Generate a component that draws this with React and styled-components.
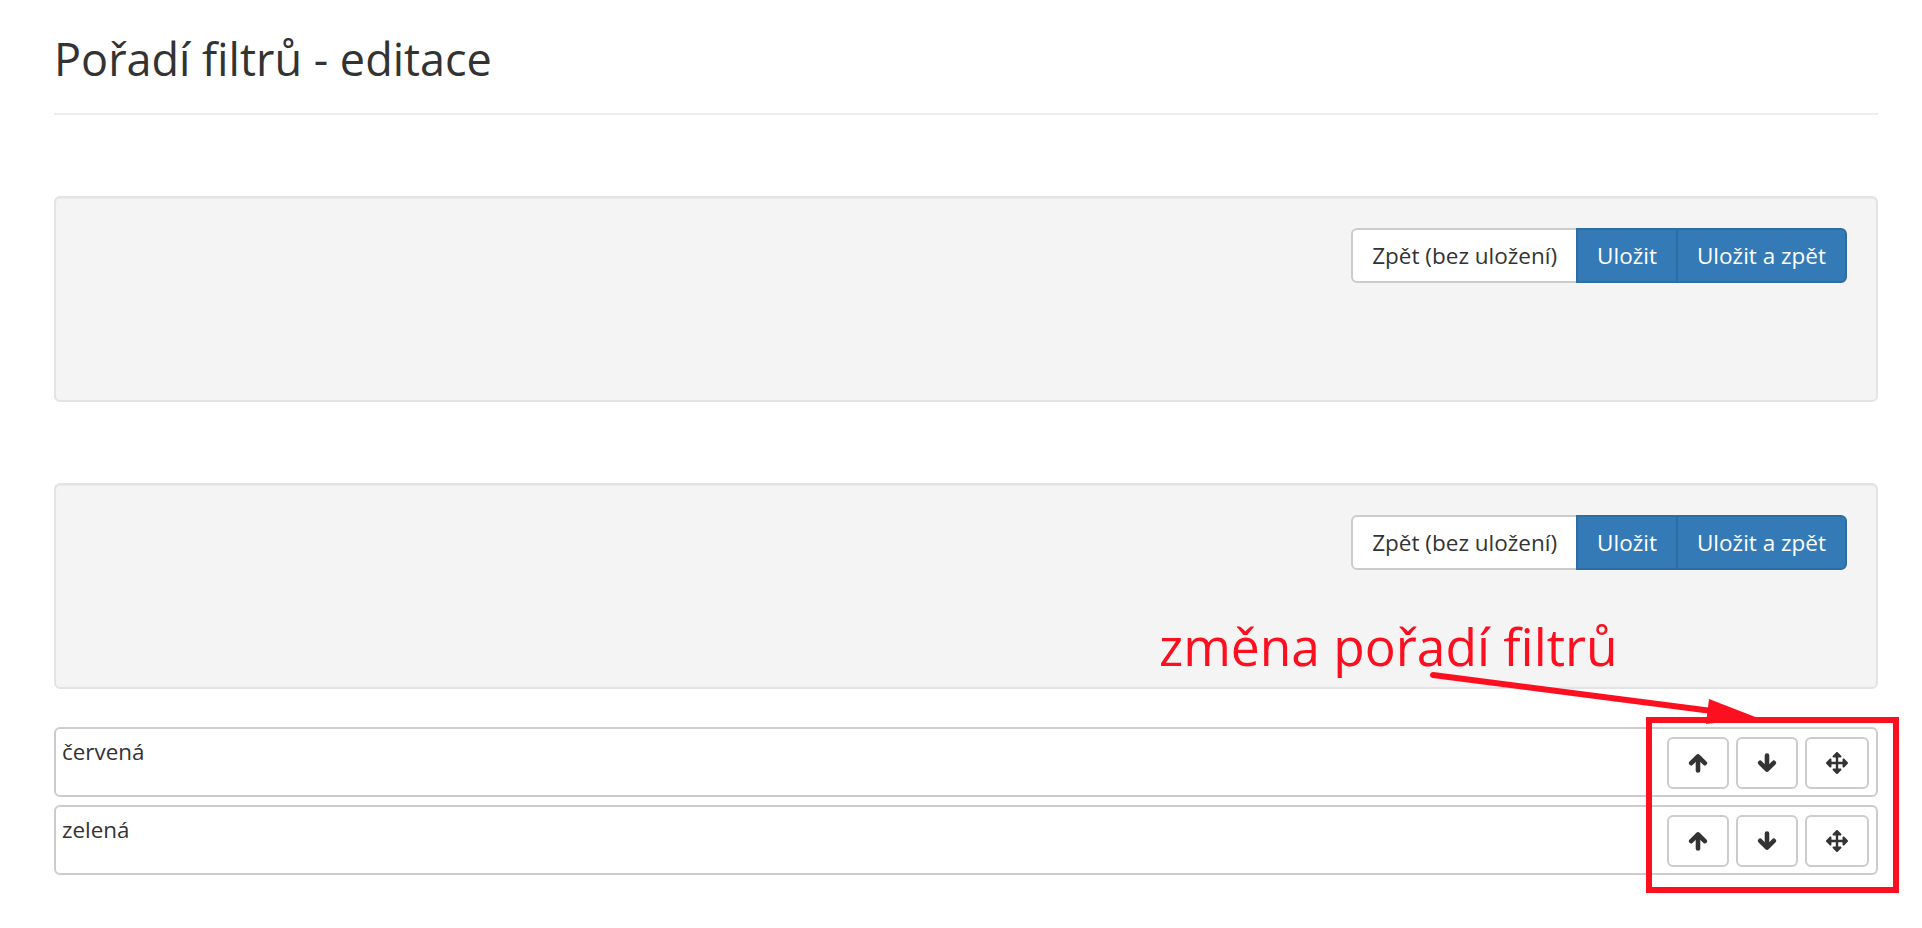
import React from "react";
import styled, { createGlobalStyle } from "styled-components";
import { FaArrowsAlt } from "react-icons/fa";

const GlobalStyle = createGlobalStyle`
  html, body {
    margin: 0;
    padding: 0;
    background: #fff;
  }
  body {
    font-family: "Open Sans", "Liberation Sans", sans-serif;
    color: #333;
  }
  * {
    box-sizing: border-box;
  }
`;

const Page = styled.div`
  position: relative;
  min-height: 928px;
  padding: 35px 44px 0 54px;
`;

const PageHeader = styled.h1`
  margin: 0 0 81px;
  padding-bottom: 30px;
  border-bottom: 2px solid #eee;
  font-size: 45px;
  font-weight: 400;
  line-height: 48px;
  color: #333;
`;

const Well = styled.div`
  display: flex;
  justify-content: flex-end;
  align-items: flex-start;
  height: 206px;
  padding: 30px 29px 29px;
  margin-bottom: ${(p) => p.$gap}px;
  background: #f4f4f4;
  border: 2px solid #e3e3e3;
  border-radius: 6px;
  box-shadow: inset 0 1px 1px rgba(0, 0, 0, 0.05);
`;

const ButtonGroup = styled.div`
  display: flex;
`;

const ActionButton = styled.button`
  font-family: "Open Sans", "Liberation Sans", sans-serif;
  font-size: 22.5px;
  line-height: 31px;
  padding: 10px 19px;
  border: 2px solid ${(p) => (p.$primary ? "#2e6da4" : "#ccc")};
  background: ${(p) => (p.$primary ? "#337ab7" : "#fff")};
  color: ${(p) => (p.$primary ? "#fff" : "#333")};
  border-radius: 0;
  cursor: pointer;

  & + & {
    margin-left: -2px;
  }
  &:first-child {
    border-radius: 6px 0 0 6px;
  }
  &:last-child {
    border-radius: 0 6px 6px 0;
  }
`;

const FilterList = styled.div`
  display: flex;
  flex-direction: column;
  gap: 8px;
`;

const FilterRow = styled.div`
  display: flex;
  justify-content: space-between;
  align-items: flex-start;
  height: 70px;
  padding: 8px 7px 0 6px;
  border: 2px solid #ccc;
  border-radius: 6px;
`;

const FilterName = styled.div`
  font-size: 22.4px;
  line-height: 29px;
  color: #333;
`;

const RowTools = styled.div`
  display: flex;
  gap: 7px;
`;

const IconButton = styled.button`
  display: flex;
  align-items: center;
  justify-content: center;
  width: ${(p) => p.$w}px;
  height: 52px;
  padding: 0;
  background: #fff;
  border: 2px solid #ccc;
  border-radius: 6px;
  color: #333;
  cursor: pointer;
`;

const NoteText = styled.div`
  position: absolute;
  left: 1159px;
  top: 621px;
  font-size: 51.5px;
  line-height: 50px;
  color: #fc0f1e;
  white-space: nowrap;
`;

const NoteLayer = styled.svg`
  position: absolute;
  left: 0;
  top: 0;
  width: 1922px;
  height: 928px;
  pointer-events: none;
`;

const Arrow = ({ down }) => (
  <svg
    width="20"
    height="20"
    viewBox="0 0 20 20"
    style={down ? { transform: "rotate(180deg)" } : undefined}
  >
    <g
      fill="none"
      stroke="currentColor"
      strokeWidth="4.6"
      strokeLinecap="round"
      strokeLinejoin="round"
    >
      <path d="M10 17.5V4" />
      <path d="M3.2 10.2L10 3.4l6.8 6.8" />
    </g>
  </svg>
);

const Toolbar = () => (
  <ButtonGroup>
    <ActionButton>Zpět (bez uložení)</ActionButton>
    <ActionButton $primary>Uložit</ActionButton>
    <ActionButton $primary>Uložit a zpět</ActionButton>
  </ButtonGroup>
);

const filters = ["červená", "zelená"];

export default function App() {
  return (
    <>
      <GlobalStyle />
      <Page>
        <PageHeader>Pořadí filtrů - editace</PageHeader>

        <Well $gap={81}>
          <Toolbar />
        </Well>
        <Well $gap={38}>
          <Toolbar />
        </Well>

        <FilterList>
          {filters.map((name) => (
            <FilterRow key={name}>
              <FilterName>{name}</FilterName>
              <RowTools>
                <IconButton $w={62}>
                  <Arrow />
                </IconButton>
                <IconButton $w={62}>
                  <Arrow down />
                </IconButton>
                <IconButton $w={64}>
                  <FaArrowsAlt size={22} />
                </IconButton>
              </RowTools>
            </FilterRow>
          ))}
        </FilterList>

        <NoteText>změna pořadí filtrů</NoteText>
        <NoteLayer viewBox="0 0 1922 928">
          <line
            x1="1433"
            y1="675"
            x2="1712"
            y2="711"
            stroke="#fc0f1e"
            strokeWidth="6"
            strokeLinecap="round"
          />
          <polygon points="1709,699 1758,718 1706,724" fill="#fc0f1e" />
          <rect
            x="1649"
            y="720"
            width="247"
            height="170"
            fill="none"
            stroke="#fc0f1e"
            strokeWidth="6"
          />
        </NoteLayer>
      </Page>
    </>
  );
}
